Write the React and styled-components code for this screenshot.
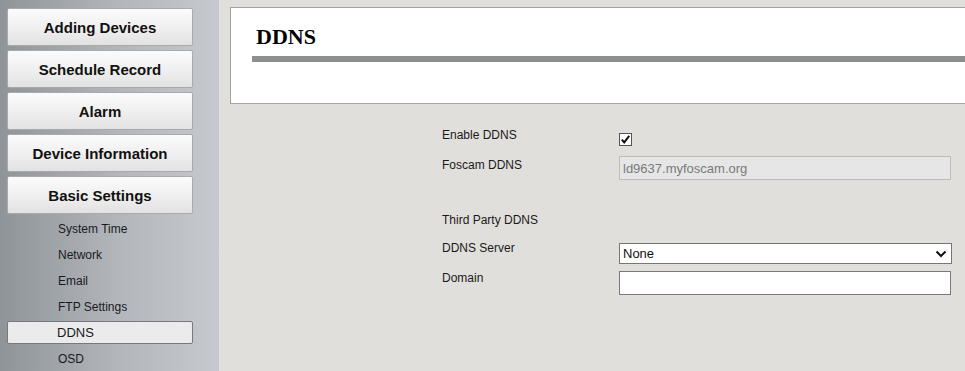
import React from 'react';
import styled, { createGlobalStyle } from 'styled-components';

const GlobalStyle = createGlobalStyle`
  html, body {
    margin: 0;
    padding: 0;
    background: #e1dfdb;
    font-family: "Liberation Sans", Arial, sans-serif;
  }
`;

const menu = ['Adding Devices', 'Schedule Record', 'Alarm', 'Device Information', 'Basic Settings'];
const subItems = ['System Time', 'Network', 'Email', 'FTP Settings', 'DDNS', 'OSD'];

export default function App() {
  return (
    <Page>
      <GlobalStyle />
      <Sidebar>
        {menu.map((m) => (
          <MenuButton key={m}>{m}</MenuButton>
        ))}
        <SubList>
          {subItems.map((s) => (
            <SubItem key={s} $active={s === 'DDNS'}>{s}</SubItem>
          ))}
        </SubList>
      </Sidebar>
      <Main>
        <Panel>
          <Title>DDNS</Title>
          <Rule />
        </Panel>
        <Form>
          <Row $gap={23}>
            <Label>Enable DDNS</Label>
            <Check>
              <svg width="11" height="11" viewBox="0 0 11 11">
                <path d="M1.8 5.6 L4.2 8.4 L9.2 1.8" stroke="#111" strokeWidth="2" fill="none" />
              </svg>
            </Check>
          </Row>
          <Row $gap={10}>
            <Label $offset={1}>Foscam DDNS</Label>
            <TextBox $disabled>ld9637.myfoscam.org</TextBox>
          </Row>
          <Row $gap={32}>
            <Label>Third Party DDNS</Label>
          </Row>
          <Row $gap={12}>
            <Label>DDNS Server</Label>
            <Select>
              <span>None</span>
              <svg width="12" height="8" viewBox="0 0 12 8">
                <path d="M1.5 1.5 L6 6 L10.5 1.5" stroke="#111" strokeWidth="2" fill="none" />
              </svg>
            </Select>
          </Row>
          <Row $gap={6}>
            <Label>Domain</Label>
            <TextBox $shift={1} />
          </Row>
        </Form>
      </Main>
    </Page>
  );
}

const Page = styled.div`
  display: flex;
  width: 965px;
  height: 371px;
  overflow: hidden;
`;

const Sidebar = styled.div`
  width: 219px;
  flex-shrink: 0;
  background: linear-gradient(to right, #8f9499 0%, #b3b7bc 55%, #c6c9cd 100%);
  padding: 8px 0 0 7px;
  box-sizing: border-box;
  display: flex;
  flex-direction: column;
  gap: 4px;
  overflow: hidden;
`;

const MenuButton = styled.div`
  width: 186px;
  height: 38px;
  flex-shrink: 0;
  box-sizing: border-box;
  border: 1px solid #a8aaad;
  border-radius: 2px;
  background: linear-gradient(to bottom, #fbfbfb 0%, #f0f0f0 50%, #e2e2e2 100%);
  display: flex;
  align-items: center;
  justify-content: center;
  font-weight: bold;
  font-size: 15px;
  color: #111;
`;

const SubList = styled.div`
  display: flex;
  flex-direction: column;
  flex-shrink: 0;
  margin-top: -2px;
`;

const SubItem = styled.div`
  width: 186px;
  flex-shrink: 0;
  height: ${(p) => (p.$active ? '23px' : '26px')};
  margin: ${(p) => (p.$active ? '1px 0 2px' : '0')};
  box-sizing: border-box;
  display: flex;
  align-items: center;
  padding-left: ${(p) => (p.$active ? '49px' : '51px')};
  font-size: ${(p) => (p.$active ? '13px' : '12px')};
  color: #1a1a1a;
  border: ${(p) => (p.$active ? '1px solid #77797b' : 'none')};
  border-radius: 2px;
  background: ${(p) => (p.$active ? '#ebebeb' : 'transparent')};
`;

const Main = styled.div`
  flex: 1;
  background: #e1dfdb;
  padding: 7px 0 0 11px;
  overflow: hidden;
`;

const Panel = styled.div`
  height: 97px;
  box-sizing: border-box;
  margin-right: -20px;
  background: #fff;
  border: 1px solid #a3a3a3;
  padding: 16px 0 0 21px;
`;

const Title = styled.div`
  font-family: "Liberation Serif", "Times New Roman", serif;
  font-weight: bold;
  font-size: 22px;
  line-height: 26px;
  color: #000;
  padding-left: 4px;
`;

const Rule = styled.div`
  height: 6px;
  margin-top: 6px;
  background: #8c8f8e;
`;

const Form = styled.div`
  display: flex;
  flex-direction: column;
  margin-left: 212px;
  font-size: 12px;
  color: #1a1a1a;
`;

const Row = styled.div`
  display: flex;
  align-items: flex-start;
  margin-top: ${(p) => p.$gap}px;
`;

const Label = styled.div`
  width: 177px;
  flex-shrink: 0;
  line-height: 16px;
  padding-top: ${(p) => p.$offset || 0}px;
`;

const Check = styled.div`
  width: 13px;
  height: 13px;
  margin-top: 6px;
  box-sizing: border-box;
  border: 1px solid #555;
  background: #fff;
  display: flex;
  align-items: center;
  justify-content: center;
`;

const TextBox = styled.div`
  width: 332px;
  height: 24px;
  margin-top: ${(p) => p.$shift || 0}px;
  box-sizing: border-box;
  border: 1px solid ${(p) => (p.$disabled ? '#bdbdbd' : '#7a7a7a')};
  background: ${(p) => (p.$disabled ? '#e6e6e6' : '#fff')};
  color: #7a7a7a;
  font-size: 13px;
  display: flex;
  align-items: center;
  padding-left: 3px;
`;

const Select = styled.div`
  width: 333px;
  height: 21px;
  margin-top: 3px;
  box-sizing: border-box;
  border: 1px solid #767676;
  background: #fff;
  color: #111;
  font-size: 13px;
  display: flex;
  align-items: center;
  justify-content: space-between;
  padding: 0 4px 0 3px;
`;
